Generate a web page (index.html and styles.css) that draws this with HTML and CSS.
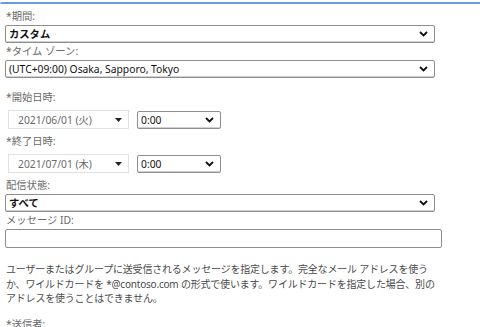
FILE: index.html
```html
<!DOCTYPE html>
<html lang="ja">
<head>
    <meta charset="UTF-8">
    <title>メッセージ追跡</title>
    <link rel="stylesheet" href="styles.css">
</head>
<body>
    <div class="focus-line"></div>
    <div class="form">
        <div class="label">*期間:</div>
        <div class="select wide">
            <span class="value strong">カスタム</span>
            <svg class="chevron" width="9" height="6" viewBox="0 0 9 6"><path d="M1 1l3.5 3.5L8 1" fill="none" stroke="#111" stroke-width="1.8"/></svg>
        </div>

        <div class="label">*タイム ゾーン:</div>
        <div class="select wide">
            <span class="value">(UTC+09:00) Osaka, Sapporo, Tokyo</span>
            <svg class="chevron" width="9" height="6" viewBox="0 0 9 6"><path d="M1 1l3.5 3.5L8 1" fill="none" stroke="#111" stroke-width="1.8"/></svg>
        </div>

        <div class="label spaced">*開始日時:</div>
        <div class="date-row">
            <div class="date-picker">
                <span>2021/06/01 (火)</span>
                <svg width="7" height="4" viewBox="0 0 7 4"><path d="M0 0h7L3.5 4z" fill="#222"/></svg>
            </div>
            <div class="select time">
                <span class="value">0:00</span>
                <svg class="chevron" width="9" height="6" viewBox="0 0 9 6"><path d="M1 1l3.5 3.5L8 1" fill="none" stroke="#111" stroke-width="1.8"/></svg>
            </div>
        </div>

        <div class="label">*終了日時:</div>
        <div class="date-row">
            <div class="date-picker">
                <span>2021/07/01 (木)</span>
                <svg width="7" height="4" viewBox="0 0 7 4"><path d="M0 0h7L3.5 4z" fill="#222"/></svg>
            </div>
            <div class="select time">
                <span class="value">0:00</span>
                <svg class="chevron" width="9" height="6" viewBox="0 0 9 6"><path d="M1 1l3.5 3.5L8 1" fill="none" stroke="#111" stroke-width="1.8"/></svg>
            </div>
        </div>

        <div class="label">配信状態:</div>
        <div class="select wide">
            <span class="value strong">すべて</span>
            <svg class="chevron" width="9" height="6" viewBox="0 0 9 6"><path d="M1 1l3.5 3.5L8 1" fill="none" stroke="#111" stroke-width="1.8"/></svg>
        </div>

        <div class="label">メッセージ ID:</div>
        <div class="text-input"></div>

        <p class="help">ユーザーまたはグループに送受信されるメッセージを指定します。完全なメール アドレスを使うか、ワイルドカードを *@contoso.com の形式で使います。ワイルドカードを指定した場合、別のアドレスを使うことはできません。</p>

        <div class="label">*送信者:</div>
    </div>
</body>
</html>
```

FILE: styles.css
```css
body {
    margin: 0;
    background: #fff;
    font-family: "Noto Sans", "Noto Sans CJK JP", sans-serif;
    font-size: 10.3px;
    color: #222;
    overflow: hidden;
}

.focus-line {
    height: 2px;
    margin-top: 2px;
    background-color: #6c9be2;
    border-top-left-radius: 2px;
}

.form {
    padding: 4px 0 0 5px;
}

.label {
    color: #6a6a6a;
    font-size: 10.3px;
    line-height: 15px;
    height: 15px;
    padding: 1px 0 1px 1px;
}

.label.spaced {
    margin-top: 11px;
}

.select {
    display: flex;
    align-items: center;
    justify-content: space-between;
    box-sizing: border-box;
    height: 18px;
    border: 1px solid #8e8e8e;
    border-radius: 2px;
    box-shadow: inset 0 -1px 0 #d0d0d0;
    padding: 0 6px 0 3px;
    background: #fff;
}

.select.wide {
    width: 430px;
}

.value {
    font-size: 10.3px;
    color: #111;
    line-height: 16px;
}

.value.strong {
    font-weight: bold;
}

.date-row {
    display: flex;
    align-items: center;
    gap: 8px;
    padding: 4px 0 4px 3px;
}

.date-picker {
    display: flex;
    align-items: center;
    justify-content: space-between;
    box-sizing: border-box;
    width: 121px;
    height: 19px;
    border: 1px solid #e1e1e1;
    padding: 0 6px 0 9px;
    color: #6a6a6a;
}

.select.time {
    width: 84px;
    height: 18px;
}

.text-input {
    box-sizing: border-box;
    width: 437px;
    height: 19px;
    border: 1px solid #8e8e8e;
    border-radius: 2px;
}

.help {
    margin: 14px 0 10px 1px;
    width: 434px;
    color: #4a4a4a;
    font-size: 10px;
    line-height: 14.5px;
    letter-spacing: -0.2px;
}
```
